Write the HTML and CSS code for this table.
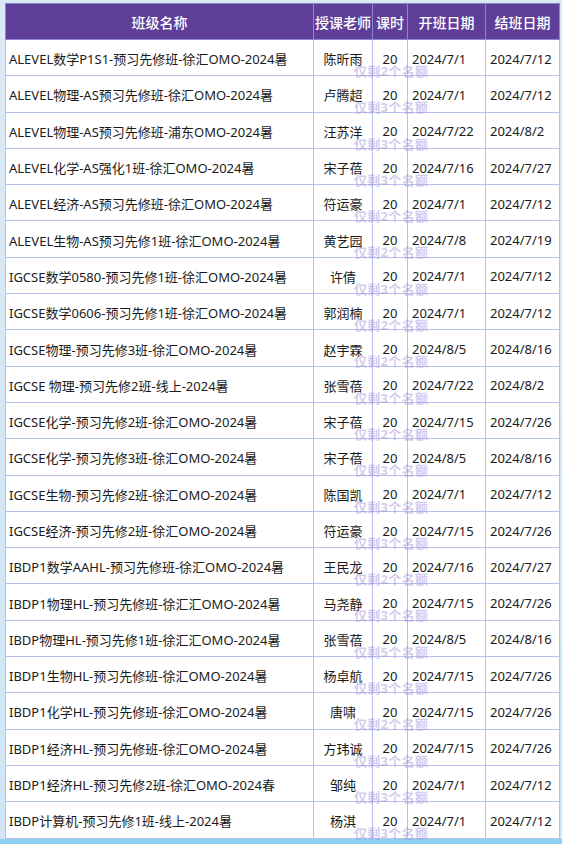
FILE: index.html
```html
<!DOCTYPE html>
<html lang="zh-CN">
<head>
<meta charset="utf-8">
<link rel="stylesheet" href="styles.css">
</head>
<body>
<div class="wrap">
<table class="sched">
<colgroup><col class="c-name"><col class="c-teacher"><col class="c-hours"><col class="c-start"><col class="c-end"></colgroup>
<thead>
<tr><th>班级名称</th><th>授课老师</th><th>课时</th><th>开班日期</th><th>结班日期</th></tr>
</thead>
<tbody>
<tr><td class="name">ALEVEL数学P1S1-预习先修班-徐汇OMO-2024暑</td><td class="ctr">陈昕雨</td><td class="ctr hrs">20<span class="wm">仅剩2个名额</span></td><td class="date">2024/7/1</td><td class="date">2024/7/12</td></tr>
<tr><td class="name">ALEVEL物理-AS预习先修班-徐汇OMO-2024暑</td><td class="ctr">卢腾超</td><td class="ctr hrs">20<span class="wm">仅剩3个名额</span></td><td class="date">2024/7/1</td><td class="date">2024/7/12</td></tr>
<tr><td class="name">ALEVEL物理-AS预习先修班-浦东OMO-2024暑</td><td class="ctr">汪苏洋</td><td class="ctr hrs">20<span class="wm">仅剩3个名额</span></td><td class="date">2024/7/22</td><td class="date">2024/8/2</td></tr>
<tr><td class="name">ALEVEL化学-AS强化1班-徐汇OMO-2024暑</td><td class="ctr">宋子蓓</td><td class="ctr hrs">20<span class="wm">仅剩3个名额</span></td><td class="date">2024/7/16</td><td class="date">2024/7/27</td></tr>
<tr><td class="name">ALEVEL经济-AS预习先修班-徐汇OMO-2024暑</td><td class="ctr">符运豪</td><td class="ctr hrs">20<span class="wm">仅剩2个名额</span></td><td class="date">2024/7/1</td><td class="date">2024/7/12</td></tr>
<tr><td class="name">ALEVEL生物-AS预习先修1班-徐汇OMO-2024暑</td><td class="ctr">黄艺园</td><td class="ctr hrs">20<span class="wm">仅剩2个名额</span></td><td class="date">2024/7/8</td><td class="date">2024/7/19</td></tr>
<tr><td class="name">IGCSE数学0580-预习先修1班-徐汇OMO-2024暑</td><td class="ctr">许倩</td><td class="ctr hrs">20<span class="wm">仅剩3个名额</span></td><td class="date">2024/7/1</td><td class="date">2024/7/12</td></tr>
<tr><td class="name">IGCSE数学0606-预习先修1班-徐汇OMO-2024暑</td><td class="ctr">郭润楠</td><td class="ctr hrs">20<span class="wm">仅剩2个名额</span></td><td class="date">2024/7/1</td><td class="date">2024/7/12</td></tr>
<tr><td class="name">IGCSE物理-预习先修3班-徐汇OMO-2024暑</td><td class="ctr">赵宇霖</td><td class="ctr hrs">20<span class="wm">仅剩2个名额</span></td><td class="date">2024/8/5</td><td class="date">2024/8/16</td></tr>
<tr><td class="name">IGCSE 物理-预习先修2班-线上-2024暑</td><td class="ctr">张雪蓓</td><td class="ctr hrs">20<span class="wm">仅剩3个名额</span></td><td class="date">2024/7/22</td><td class="date">2024/8/2</td></tr>
<tr><td class="name">IGCSE化学-预习先修2班-徐汇OMO-2024暑</td><td class="ctr">宋子蓓</td><td class="ctr hrs">20<span class="wm">仅剩2个名额</span></td><td class="date">2024/7/15</td><td class="date">2024/7/26</td></tr>
<tr><td class="name">IGCSE化学-预习先修3班-徐汇OMO-2024暑</td><td class="ctr">宋子蓓</td><td class="ctr hrs">20<span class="wm">仅剩3个名额</span></td><td class="date">2024/8/5</td><td class="date">2024/8/16</td></tr>
<tr><td class="name">IGCSE生物-预习先修2班-徐汇OMO-2024暑</td><td class="ctr">陈国凯</td><td class="ctr hrs">20<span class="wm">仅剩3个名额</span></td><td class="date">2024/7/1</td><td class="date">2024/7/12</td></tr>
<tr><td class="name">IGCSE经济-预习先修2班-徐汇OMO-2024暑</td><td class="ctr">符运豪</td><td class="ctr hrs">20<span class="wm">仅剩3个名额</span></td><td class="date">2024/7/15</td><td class="date">2024/7/26</td></tr>
<tr><td class="name">IBDP1数学AAHL-预习先修班-徐汇OMO-2024暑</td><td class="ctr">王民龙</td><td class="ctr hrs">20<span class="wm">仅剩2个名额</span></td><td class="date">2024/7/16</td><td class="date">2024/7/27</td></tr>
<tr><td class="name">IBDP1物理HL-预习先修班-徐汇汇OMO-2024暑</td><td class="ctr">马尧静</td><td class="ctr hrs">20<span class="wm">仅剩3个名额</span></td><td class="date">2024/7/15</td><td class="date">2024/7/26</td></tr>
<tr><td class="name">IBDP物理HL-预习先修1班-徐汇汇OMO-2024暑</td><td class="ctr">张雪蓓</td><td class="ctr hrs">20<span class="wm">仅剩5个名额</span></td><td class="date">2024/8/5</td><td class="date">2024/8/16</td></tr>
<tr><td class="name">IBDP1生物HL-预习先修班-徐汇OMO-2024暑</td><td class="ctr">杨卓航</td><td class="ctr hrs">20<span class="wm">仅剩3个名额</span></td><td class="date">2024/7/15</td><td class="date">2024/7/26</td></tr>
<tr><td class="name">IBDP1化学HL-预习先修班-徐汇OMO-2024暑</td><td class="ctr">唐啸</td><td class="ctr hrs">20<span class="wm">仅剩2个名额</span></td><td class="date">2024/7/15</td><td class="date">2024/7/26</td></tr>
<tr><td class="name">IBDP1经济HL-预习先修班-徐汇OMO-2024暑</td><td class="ctr">方玮诚</td><td class="ctr hrs">20<span class="wm">仅剩3个名额</span></td><td class="date">2024/7/15</td><td class="date">2024/7/26</td></tr>
<tr><td class="name">IBDP1经济HL-预习先修2班-徐汇OMO-2024春</td><td class="ctr">邹纯</td><td class="ctr hrs">20<span class="wm">仅剩3个名额</span></td><td class="date">2024/7/1</td><td class="date">2024/7/12</td></tr>
<tr><td class="name">IBDP计算机-预习先修1班-线上-2024暑</td><td class="ctr">杨淇</td><td class="ctr hrs">20<span class="wm">仅剩3个名额</span></td><td class="date">2024/7/1</td><td class="date">2024/7/12</td></tr>
</tbody>
</table>
</div>
<div class="strip"></div>
</body>
</html>
```

FILE: styles.css
```css
html, body {
  margin: 0;
  padding: 0;
}
body {
  width: 562px;
  height: 844px;
  overflow: hidden;
  background: linear-gradient(#dbe9f5, #cfe5f5);
  font-family: "Noto Sans", "Noto Sans CJK SC", sans-serif;
  display: flex;
  flex-direction: column;
}
.wrap {
  padding: 3px 3px 0 5px;
}
.sched {
  width: 554px;
  border-collapse: collapse;
  table-layout: fixed;
  background: #ffffff;
  font-size: 13px;
  color: #1a1a1a;
}
.c-name { width: 308px; }
.c-teacher { width: 59px; }
.c-hours { width: 35px; }
.c-start { width: 78px; }
.c-end { width: 74px; }
.sched th {
  background: #5e3e98;
  color: #ffffff;
  font-weight: 500;
  font-size: 14px;
  height: 35px;
  padding: 0;
  border: 1px solid #8c84cf;
  text-align: center;
}
.sched td {
  height: 36.3px;
  padding: 2px 3px 0;
  box-sizing: border-box;
  border: 1px solid #b6c2ee;
  white-space: nowrap;
  overflow: visible;
}
.sched td.name {
  text-align: left;
  padding-left: 3px;
}
.sched td.ctr {
  text-align: center;
  padding-left: 0;
  padding-right: 0;
}
.sched td.date {
  text-align: left;
  padding-left: 4px;
}
.sched td.hrs {
  position: relative;
}
.wm {
  position: absolute;
  left: -19px;
  top: 24px;
  font-size: 13px;
  line-height: 14px;
  font-weight: 700;
  color: rgba(150, 130, 215, 0.42);
  letter-spacing: 0.3px;
  pointer-events: none;
  white-space: nowrap;
}
.strip {
  flex: 1;
  background: #8fd0f2;
}
```
